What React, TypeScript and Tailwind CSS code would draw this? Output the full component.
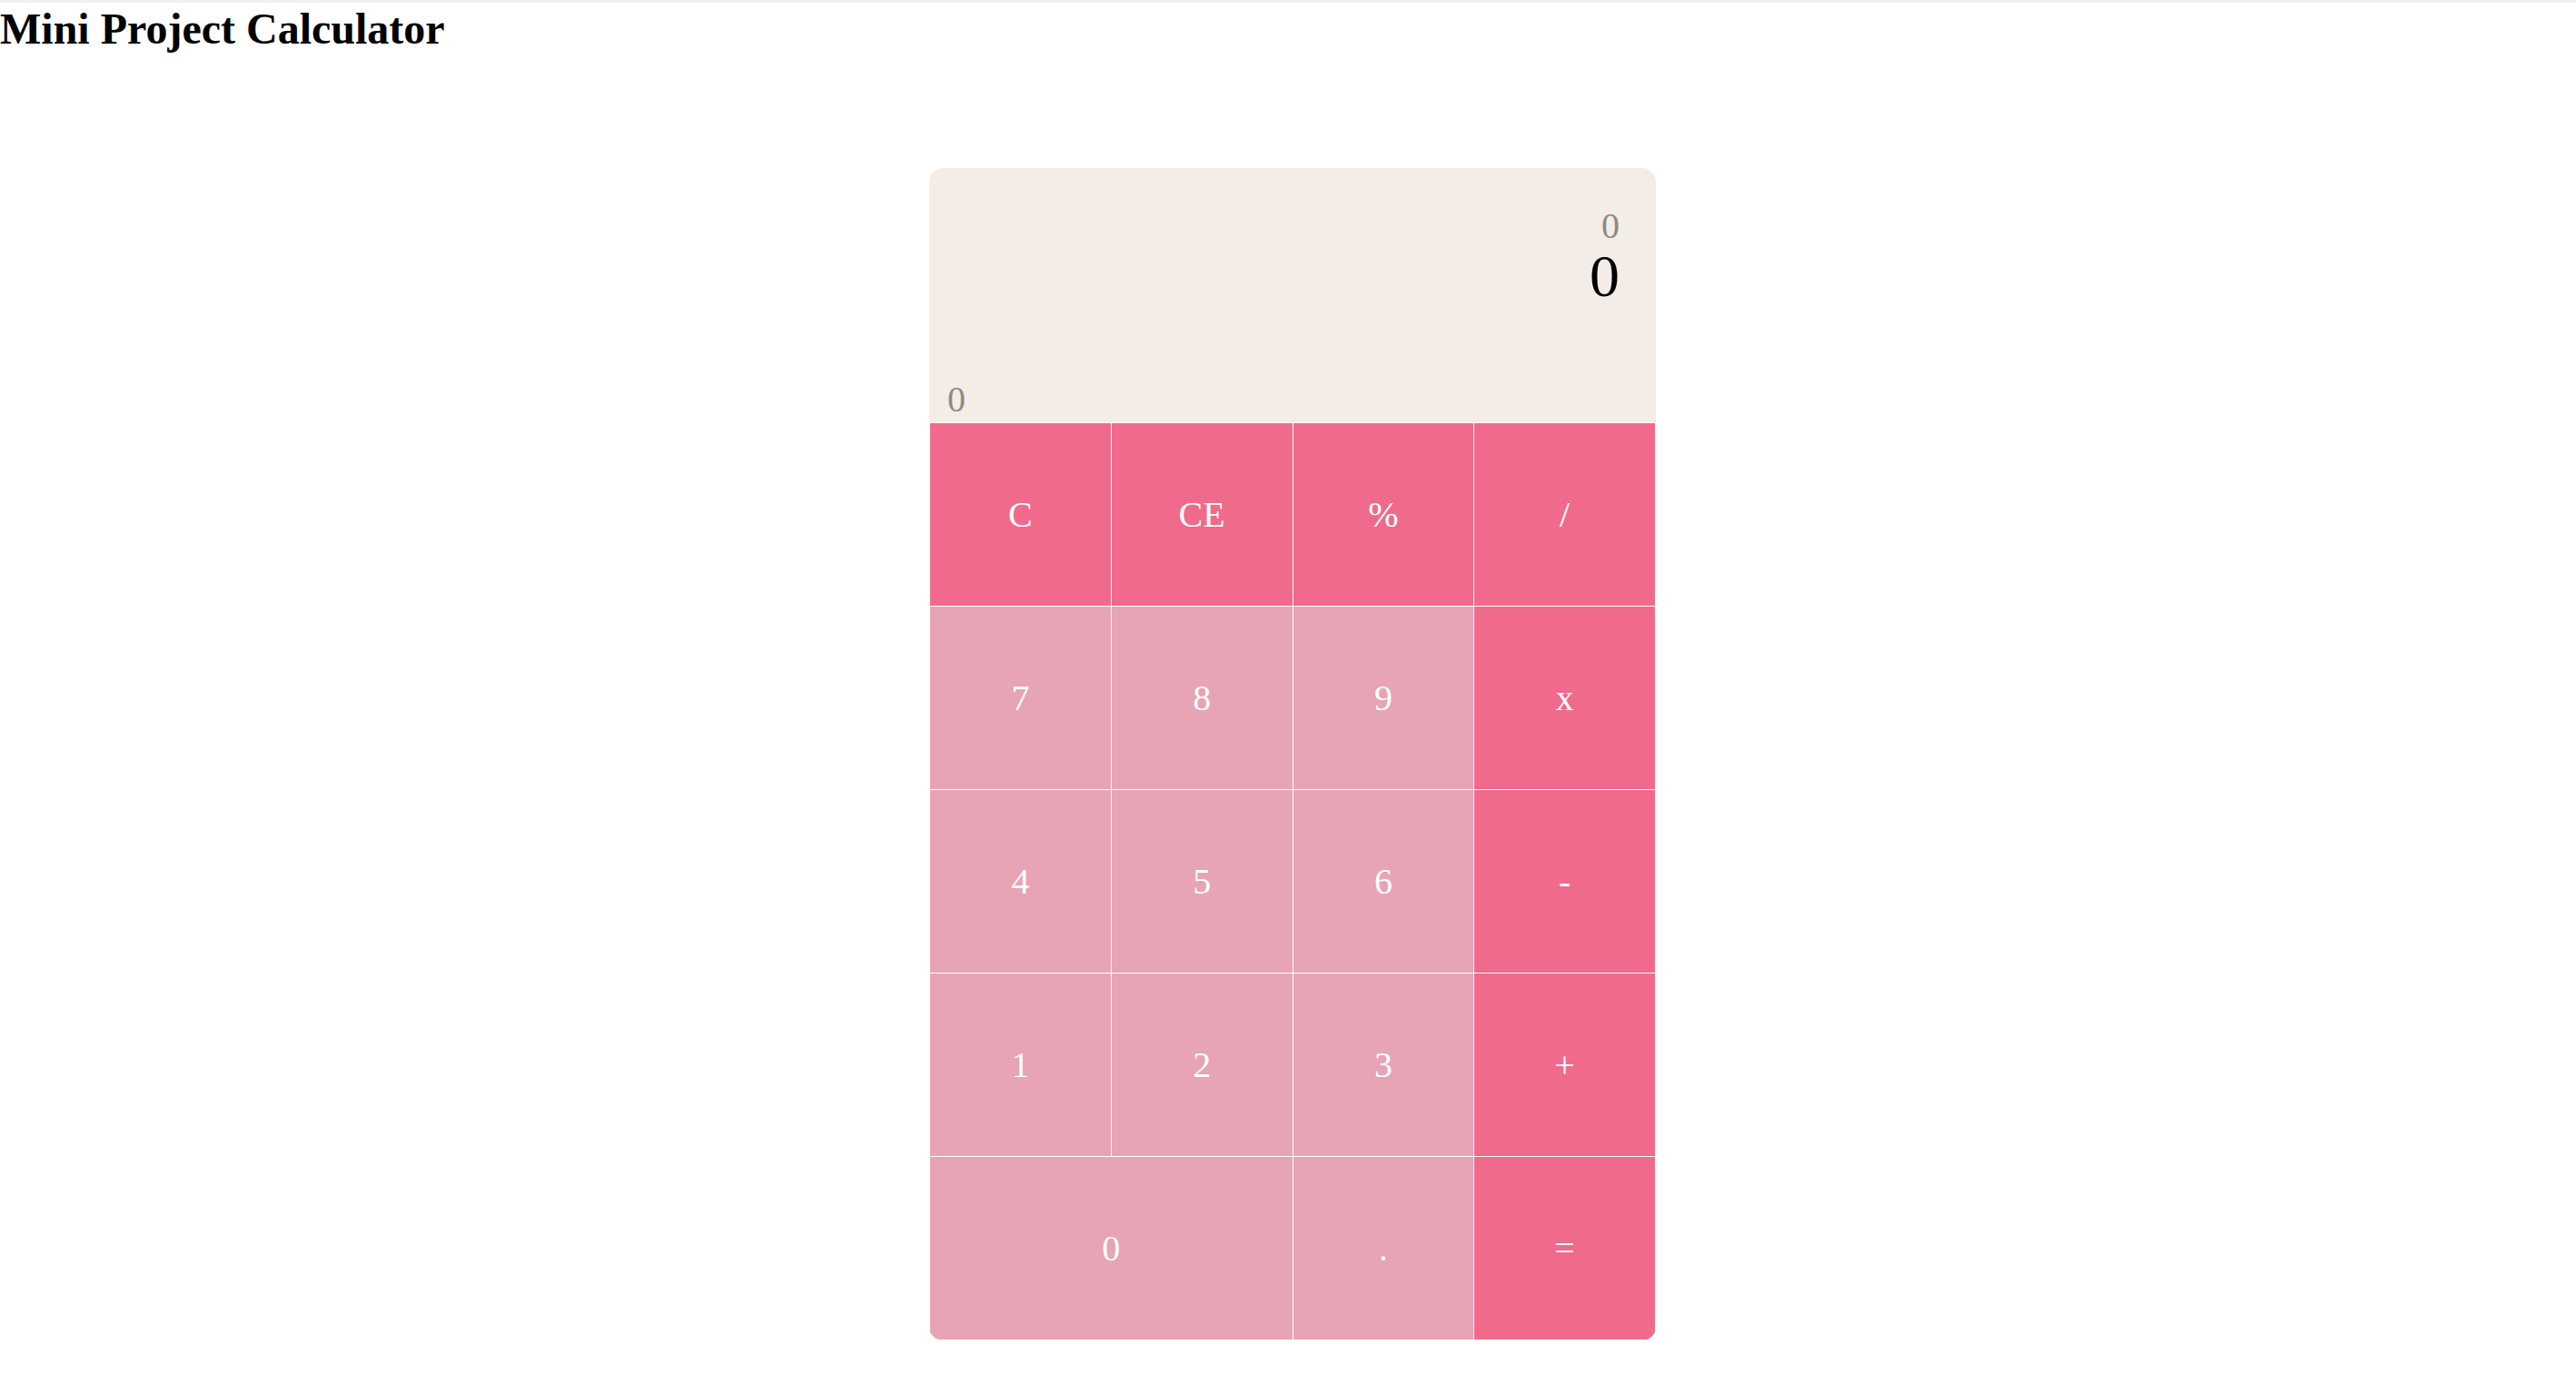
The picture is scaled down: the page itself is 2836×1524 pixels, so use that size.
const rows: { label: string; kind: "op" | "num"; span?: boolean }[][] = [
  [
    { label: "C", kind: "op" },
    { label: "CE", kind: "op" },
    { label: "%", kind: "op" },
    { label: "/", kind: "op" },
  ],
  [
    { label: "7", kind: "num" },
    { label: "8", kind: "num" },
    { label: "9", kind: "num" },
    { label: "x", kind: "op" },
  ],
  [
    { label: "4", kind: "num" },
    { label: "5", kind: "num" },
    { label: "6", kind: "num" },
    { label: "-", kind: "op" },
  ],
  [
    { label: "1", kind: "num" },
    { label: "2", kind: "num" },
    { label: "3", kind: "num" },
    { label: "+", kind: "op" },
  ],
  [
    { label: "0", kind: "num", span: true },
    { label: ".", kind: "num" },
    { label: "=", kind: "op" },
  ],
];

export default function App() {
  return (
    <div className="min-h-screen bg-white font-['Liberation_Serif',serif] text-black">
      <div className="h-[3px] bg-[#eef0f2]" />
      <h1 className="mt-[1px] text-[48px] font-bold leading-[55px]">
        Mini Project Calculator
      </h1>

      <div className="flex justify-center pl-[10px] pt-[126px]">
        <div className="w-[800px] overflow-hidden rounded-[15px]">
          {/* display */}
          <div className="flex h-[280px] flex-col bg-[#f4ece6] pt-[44px] pb-[5px]">
            <div className="pr-[40px] text-right text-[40px] leading-[40px] text-[#8c8b86]">
              0
            </div>
            <div className="mt-[2px] pr-[40px] text-right text-[66px] leading-[66px] text-black">
              0
            </div>
            <div className="mt-auto pl-[20px] text-[40px] leading-[40px] text-[#8c8b86]">
              0
            </div>
          </div>

          {/* keypad */}
          <div className="grid grid-cols-4 gap-px bg-white p-px">
            {rows.flat().map((b, i) => (
              <button
                key={i}
                type="button"
                className={
                  "flex h-[201px] items-center justify-center text-[40px] text-white " +
                  (b.kind === "op" ? "bg-[#f06a8b] " : "bg-[#e6a4b4] ") +
                  (b.span ? "col-span-2" : "")
                }
              >
                {b.label}
              </button>
            ))}
          </div>
        </div>
      </div>
    </div>
  );
}
